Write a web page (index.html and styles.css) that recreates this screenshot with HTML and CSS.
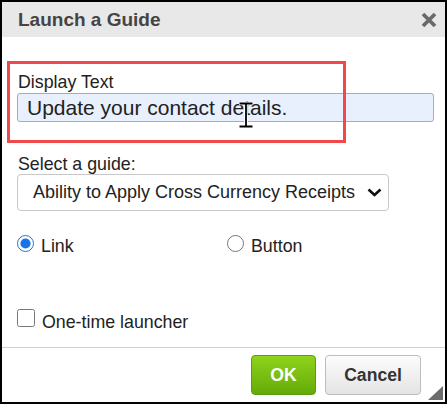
FILE: index.html
```html
<!DOCTYPE html>
<html lang="en">
<head>
    <meta charset="UTF-8">
    <meta name="viewport" content="width=device-width, initial-scale=1.0">
    <title>Launch a Guide</title>
    <link rel="stylesheet" href="styles.css">
</head>
<body>
    <div class="dialog">
        <div class="dialog-header">
            <span class="dialog-title">Launch a Guide</span>
            <svg class="close-icon" width="16" height="16" viewBox="0 0 16 16">
                <path d="M2 2 L14 14 M14 2 L2 14" stroke="#6a6a6a" stroke-width="3.8" stroke-linecap="butt"/>
            </svg>
        </div>

        <div class="dialog-body">
            <label class="field-label">Display Text</label>
            <input class="text-input" type="text" value="Update your contact details."/>

            <label class="field-label select-label">Select a guide:</label>
            <div class="select-box">
                <span>Ability to Apply Cross Currency Receipts</span>
                <svg width="15" height="9" viewBox="0 0 15 9">
                    <path d="M1.5 1.5 L7.5 7 L13.5 1.5" fill="none" stroke="#111" stroke-width="2.6"/>
                </svg>
            </div>

            <div class="radio-row">
                <label class="option option-link">
                    <input type="radio" name="kind" checked/>
                    <span>Link</span>
                </label>
                <label class="option">
                    <input type="radio" name="kind"/>
                    <span>Button</span>
                </label>
            </div>

            <label class="option check-row">
                <input type="checkbox"/>
                <span>One-time launcher</span>
            </label>
        </div>

        <div class="dialog-footer">
            <button class="btn btn-ok">OK</button>
            <button class="btn btn-cancel">Cancel</button>
        </div>

        <!-- annotation + cursor overlays -->
        <div class="highlight-box"></div>
        <svg class="ibeam" width="16" height="26" viewBox="0 0 16 26">
            <path d="M1 1.5 H15 M8 1.5 V24.5 M1 24.5 H15" stroke="#fff" stroke-width="3.5" fill="none"/>
            <path d="M1.5 1.5 H14.5 M8 1.5 V24.5 M1.5 24.5 H14.5" stroke="#000" stroke-width="1.8" fill="none"/>
        </svg>
        <div class="resize-grip"></div>
    </div>
</body>
</html>
```

FILE: styles.css
```css
* {
    box-sizing: border-box;
}

body {
    margin: 0;
    background-color: #fff;
    font-family: 'Liberation Sans', Arial, sans-serif;
    color: #222;
}

.dialog {
    position: relative;
    width: 447px;
    height: 404px;
    border: 2px solid #000;
    display: flex;
    flex-direction: column;
    background-color: #fff;
}

.dialog-header {
    height: 35px;
    flex-shrink: 0;
    background-color: #e8e8e8;
    display: flex;
    align-items: center;
    justify-content: space-between;
    padding: 0 8px 0 16px;
}

.dialog-title {
    font-size: 19px;
    font-weight: bold;
    color: #444;
}

.close-icon {
    margin-top: 1px;
}

.dialog-body {
    flex: 1;
    display: flex;
    flex-direction: column;
    align-items: flex-start;
    padding: 35px 11px 0 15px;
}

.field-label {
    display: block;
    font-size: 17.8px;
    line-height: 20px;
    color: #222;
    padding-left: 1px;
}

.select-label {
    margin-top: 32px;
}

.text-input {
    margin-top: 1px;
    width: 100%;
    height: 29px;
    padding: 0 9px;
    font-family: inherit;
    font-size: 21px;
    color: #222;
    background-color: #e8f0fe;
    border: 1px solid #a7acb4;
    border-radius: 3px;
    outline: none;
}

.select-box {
    width: 372px;
    height: 37px;
    display: flex;
    align-items: center;
    justify-content: space-between;
    padding: 0 6px 0 15px;
    font-size: 18px;
    color: #222;
    border: 1px solid #c8c8c8;
    border-radius: 4px;
    background-color: #fff;
}

.radio-row {
    margin-top: 24px;
    display: flex;
}

.option {
    display: flex;
    align-items: flex-start;
    gap: 7px;
    font-size: 17.8px;
    line-height: 22px;
    color: #222;
}

.option-link {
    width: 210px;
}

.option input {
    margin: 0;
    width: 17px;
    height: 17px;
    accent-color: #1a73e8;
}

.check-row {
    margin-top: 52px;
}

.check-row input {
    width: 18px;
    height: 18px;
}

.check-row span {
    margin-top: 2px;
}

.dialog-footer {
    flex-shrink: 0;
    border-top: 1px solid #cfcfcf;
    display: flex;
    justify-content: flex-end;
    gap: 9px;
    padding: 7px 24px 7px 0;
}

.btn {
    height: 40px;
    font-family: inherit;
    font-size: 17.6px;
    font-weight: bold;
    border-radius: 4px;
    cursor: pointer;
}

.btn-ok {
    width: 65px;
    color: #fff;
    background: linear-gradient(#8fd31b, #64ab09);
    border: 1px solid #5c9a14;
}

.btn-cancel {
    width: 96px;
    color: #333;
    background: linear-gradient(#fcfcfc, #e4e4e4);
    border: 1px solid #bdbdbd;
}

.highlight-box {
    position: absolute;
    left: 5px;
    top: 59px;
    width: 339px;
    height: 82px;
    border: 3px solid #f0484b;
}

.ibeam {
    position: absolute;
    left: 236px;
    top: 100px;
}

.resize-grip {
    position: absolute;
    right: 2px;
    bottom: 2px;
    width: 0;
    height: 0;
    border-left: 15px solid transparent;
    border-bottom: 14px solid #6c6c6c;
}
```
